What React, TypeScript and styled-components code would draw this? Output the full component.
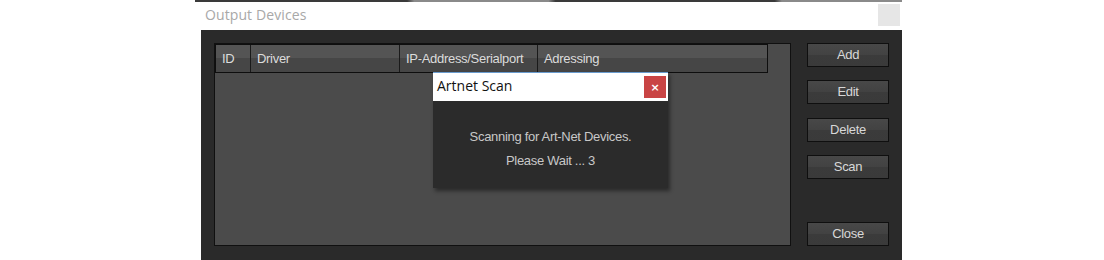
import React from "react";
import styled, { createGlobalStyle } from "styled-components";

const Global = createGlobalStyle`
  html, body { margin: 0; padding: 0; background: #ffffff; }
  body { font-family: "Liberation Sans", Arial, sans-serif; }
`;

const Page = styled.div`
  position: relative;
  width: 1104px;
  height: 260px;
  overflow: hidden;
  background: #ffffff;
`;

const TopEdge = styled.div`
  margin-left: 195px;
  width: 707px;
  height: 2px;
  background: linear-gradient(to right, #3a3a3a 0%, #3a3a3a 30%, #8a8a8a 31%, #8a8a8a 50%, #3a3a3a 51%, #3a3a3a 82%, #8a8a8a 83%);
`;

const Window = styled.div`
  margin-left: 201px;
  width: 701px;
  display: flex;
  flex-direction: column;
`;

const TitleBar = styled.div`
  height: 28px;
  display: flex;
  align-items: center;
  justify-content: space-between;
  background: #ffffff;
`;

const Title = styled.span`
  padding-left: 4px;
  padding-bottom: 4px;
  font-family: "Open Sans", "Liberation Sans", sans-serif;
  font-size: 14px;
  color: #a8a8a8;
  letter-spacing: 0.1px;
`;

const TitleClose = styled.div`
  width: 22px;
  height: 22px;
  margin-right: 2px;
  margin-bottom: 2px;
  background: #e6e6e6;
`;

const Body = styled.div`
  height: 230px;
  background: #2a2a2a;
  display: flex;
  padding: 13px 0 0 13px;
  box-sizing: border-box;
`;

const ListBox = styled.div`
  width: 577px;
  height: 203px;
  box-sizing: border-box;
  border: 1px solid #101010;
  background: #4b4b4b;
`;

const Header = styled.div`
  width: 553px;
  height: 29px;
  box-sizing: border-box;
  border: 1px solid #0e0e0e;
  display: flex;
  background: linear-gradient(to bottom, #545454 0%, #545454 50%, #464646 50%, #464646 100%);
`;

const HeaderCell = styled.div<{ $w: number }>`
  width: ${(p) => p.$w}px;
  box-sizing: border-box;
  border-right: 1px solid #1a1a1a;
  padding-left: 6px;
  display: flex;
  align-items: center;
  font-family: "Liberation Sans", Arial, sans-serif;
  font-size: 13px;
  letter-spacing: -0.3px;
  color: #dcdcdc;
  &:last-child { border-right: none; }
`;

const ButtonColumn = styled.div`
  margin-left: 16px;
  width: 82px;
  display: flex;
  flex-direction: column;
`;

const Button = styled.div<{ $top: number }>`
  margin-top: ${(p) => p.$top}px;
  height: 24px;
  box-sizing: border-box;
  border: 1px solid #0f0f0f;
  background: linear-gradient(to bottom, #484848 0%, #424242 50%, #3b3b3b 51%, #3a3a3a 100%);
  display: flex;
  align-items: center;
  justify-content: center;
  padding-bottom: 1px;
  font-family: "Liberation Sans", Arial, sans-serif;
  font-size: 13px;
  letter-spacing: -0.3px;
  color: #d8d8d8;
`;

const Dialog = styled.div`
  position: absolute;
  left: 433px;
  top: 72px;
  width: 235px;
  height: 116px;
  display: flex;
  flex-direction: column;
  box-shadow: 2px 3px 4px rgba(0, 0, 0, 0.45);
`;

const DialogTitle = styled.div`
  height: 29px;
  box-sizing: border-box;
  border-top: 1px solid #6a9ccf;
  background: #ffffff;
  display: flex;
  align-items: center;
  justify-content: space-between;
  padding-left: 4px;
  font-family: "Open Sans", "Liberation Sans", sans-serif;
  font-size: 14px;
  color: #111111;
`;

const DialogTitleText = styled.span`
  padding-bottom: 3px;
`;

const RedClose = styled.div`
  width: 22px;
  height: 22px;
  margin-right: 2px;
  background: #c94444;
  color: #ffffff;
  display: flex;
  align-items: center;
  justify-content: center;
  font-family: "DejaVu Sans", sans-serif;
  font-size: 11px;
  font-weight: bold;
`;

const DialogBody = styled.div`
  flex: 1;
  background: #2b2b2b;
  display: flex;
  flex-direction: column;
  align-items: center;
  padding-top: 28px;
  box-sizing: border-box;
  gap: 9px;
  font-family: "Liberation Sans", Arial, sans-serif;
  font-size: 13px;
  letter-spacing: -0.3px;
  color: #c8c8c8;
`;

const columns = [
  { label: "ID", w: 35 },
  { label: "Driver", w: 149 },
  { label: "IP-Address/Serialport", w: 138 },
  { label: "Adressing", w: 229 },
];

export default function App() {
  return (
    <Page>
      <Global />
      <TopEdge />
      <Window>
        <TitleBar>
          <Title>Output Devices</Title>
          <TitleClose />
        </TitleBar>
        <Body>
          <ListBox>
            <Header>
              {columns.map((c) => (
                <HeaderCell key={c.label} $w={c.w}>
                  {c.label}
                </HeaderCell>
              ))}
            </Header>
          </ListBox>
          <ButtonColumn>
            <Button $top={0}>Add</Button>
            <Button $top={13}>Edit</Button>
            <Button $top={14}>Delete</Button>
            <Button $top={13}>Scan</Button>
            <Button $top={43}>Close</Button>
          </ButtonColumn>
        </Body>
      </Window>
      <Dialog>
        <DialogTitle>
          <DialogTitleText>Artnet Scan</DialogTitleText>
          <RedClose>×</RedClose>
        </DialogTitle>
        <DialogBody>
          <span>Scanning for Art-Net Devices.</span>
          <span>Please Wait ... 3</span>
        </DialogBody>
      </Dialog>
    </Page>
  );
}
